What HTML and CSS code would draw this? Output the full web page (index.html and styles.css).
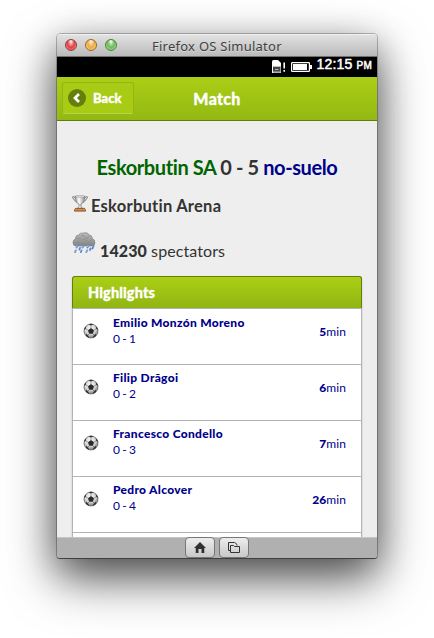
FILE: index.html
```html
<!DOCTYPE html>
<html lang="en">
<head>
<meta charset="utf-8">
<title>Firefox OS Simulator</title>
<link rel="stylesheet" href="styles.css">
</head>
<body>
<svg class="defs" width="0" height="0" aria-hidden="true">
  <defs>
    <radialGradient id="ballShade" cx="45%" cy="35%" r="65%">
      <stop offset="0" stop-color="#fff"/><stop offset=".6" stop-color="#d2d2d2"/><stop offset="1" stop-color="#777"/>
    </radialGradient>
    <linearGradient id="silver" x1="0" x2="1" y1="0" y2="0">
      <stop offset="0" stop-color="#999"/><stop offset=".4" stop-color="#fff"/><stop offset="1" stop-color="#888"/>
    </linearGradient>
    <linearGradient id="cloudShade" x1="0" x2="0" y1="0" y2="1">
      <stop offset="0" stop-color="#bbb"/><stop offset="1" stop-color="#858585"/>
    </linearGradient>
    <symbol id="ball" viewBox="0 0 16 16">
      <circle cx="8" cy="8" r="7" fill="url(#ballShade)" stroke="#555" stroke-width=".7"/>
      <path d="M8 5l3 2.200-1.100 3.500H6.100L5 7.200zM5.500 1.500L8 2.600l2.500-1.100L8 .8zM1 7l1.800-1.300.6-2.400L1.500 5.300zM15 7l-1.800-1.300-.6-2.400 1.900 2zM3 12.800l.4-2.300 2.600 3.400-.4.800zM13 12.800l-.4-2.300-2.600 3.400.4.800z" fill="#292929"/>
      <path d="M8 2.600V5M2.800 5.700L5 7.200M13.200 5.700L11 7.200M6.100 10.700L4.800 12.400M9.900 10.700l1.300 1.700" stroke="#666" stroke-width=".6"/>
    </symbol>
  </defs>
</svg>
<main class="window">
  <div class="titlebar">
    <i class="light red"></i><i class="light amber"></i><i class="light green"></i>
    <span class="title">Firefox OS Simulator</span>
  </div>
  <div class="status">
    <svg class="sim" width="14" height="14" viewBox="0 0 14 14"><path d="M0 1.500Q0 0 1.500 0H6l3 3v9.500q0 .5-.5.500h-8Q0 13 0 12.500z" fill="#fff"/><path d="M1 6.500h7.500v6H1z" fill="#444"/><path d="M1 6.500h7.500M1 12h7.500M3 9.500h3.500" stroke="#bbb" stroke-width="1"/><path d="M12.200 2.500v6" stroke="#fff" stroke-width="1.600"/><path d="M12.200 10v1.800" stroke="#fff" stroke-width="1.600"/></svg>
    <svg class="battery" width="21" height="10" viewBox="0 0 21 10"><rect x=".6" y=".6" width="17.800" height="8.800" rx=".6" fill="none" stroke="#fff" stroke-width="1.200"/><path d="M2 2h14v6H2zM19 3h2v4h-2z" fill="#fff"/></svg>
    <span class="time">12:15 <small>PM</small></span>
  </div>
  <header class="header">
    <a class="back"><svg width="18" height="18" viewBox="0 0 18 18"><circle cx="9" cy="9" r="9" fill="#667e0b"/><path d="M11 5L7 9l4 4" fill="none" stroke="#fff" stroke-width="2.700"/></svg><span>Back</span></a>
    <h1>Match</h1>
  </header>
  <section class="content">
    <h2><span class="home">Eskorbutin SA</span> <span class="score">0 - 5</span> <span class="away">no-suelo</span></h2>
    <div class="arena">
      <svg width="16" height="17" viewBox="0 0 16 17"><path d="M4 3Q0 .5.600 2.500T5 7.500M12 3q4-2.500 3.400-.5T11 7.500" fill="none" stroke="#777" stroke-width="1"/><path d="M3 1.300h10Q12.500 8 9 9v2.500l2 2.500H5l2-2.500V9Q3.500 8 3 1.300z" fill="url(#silver)" stroke="#777" stroke-width=".8"/><ellipse cx="8" cy="1.500" rx="5" ry=".8" fill="#eee" stroke="#888" stroke-width=".5"/><path d="M3.500 13.300h9l1 1.500v1.400H2.500v-1.400z" fill="#b96b2a" stroke="#76431c" stroke-width=".6"/><path d="M3.200 14.800h9.600" stroke="#e9b07a" stroke-width=".7"/></svg>
      <b>Eskorbutin Arena</b>
    </div>
    <div class="crowd">
      <svg width="24" height="22" viewBox="0 0 24 22"><path d="M4 14Q1 14 1 10.500 1 7.500 3.500 7 3 3.500 6.500 3 8 .5 11.500 1 15-.5 17.500 3q3 .5 2.800 3.500 2.700 1 2.700 4.200 0 3.300-3.500 3.300z" fill="url(#cloudShade)" stroke="#7c7c7c" stroke-width=".6"/><path d="M5 7q2-2 4 0M9 4q2-2 4 1t4-1M10 8q3-2 5 1t5-2M4 11q3-2 5 0t6 0" fill="none" stroke="#888" stroke-width=".7"/><path d="M5.500 13.500l-1 2M11.500 13.500l-1 2M16.500 13l-1 2.500M21.500 14l-1 2.500M8 16l-.6 1.500M18.500 16.500l-.6 1.500M3.700 18.500l-.6 1.500M9.500 18.500l-.6 1.500M15 18.500l-.6 1.500" stroke="#5b8bcc" stroke-width="1.900" stroke-linecap="round"/><path d="M5 14l-.4 1M11 14l-.4 1M16 13.500l-.4 1M3.300 19l-.4.600M14.700 19l-.3.600" stroke="#b8d6f8" stroke-width=".8" stroke-linecap="round"/></svg>
      <span><b>14230</b> spectators</span>
    </div>
    <div class="list">
      <h3>Highlights</h3>
      <div class="row first"><svg class="ball"><use href="#ball"/></svg><div class="goal"><b>Emilio Monzón Moreno</b><span>0 - 1</span></div><div class="minute"><b>5</b>min</div></div>
      <div class="row"><svg class="ball"><use href="#ball"/></svg><div class="goal"><b>Filip Drăgoi</b><span>0 - 2</span></div><div class="minute"><b>6</b>min</div></div>
      <div class="row"><svg class="ball"><use href="#ball"/></svg><div class="goal"><b>Francesco Condello</b><span>0 - 3</span></div><div class="minute"><b>7</b>min</div></div>
      <div class="row"><svg class="ball"><use href="#ball"/></svg><div class="goal"><b>Pedro Alcover</b><span>0 - 4</span></div><div class="minute"><b>26</b>min</div></div>
      <div class="row"></div>
    </div>
  </section>
  <footer class="toolbar">
    <div class="button"><svg width="12" height="11" viewBox="0 0 12 11"><path d="M6 0l6 6h-1.700v5H7.500V7h-3v4H1.700V6H0z" fill="#303030"/></svg></div>
    <div class="button"><svg width="12" height="11" viewBox="0 0 12 11"><path d="M2.500 8.500h-2v-8h6.200l2.300 2v1M2.500 10.500v-7h3l1 1h5v6z" fill="none" stroke="#333" stroke-width="1"/></svg></div>
  </footer>
</main>
</body>
</html>
```

FILE: styles.css
```css
* { box-sizing: border-box; }
body { margin: 0; height: 638px; padding: 34px 57px 0; overflow: hidden; background: #fff; font-family: Lato, sans-serif; color: #333; }
.defs { position: absolute; }
.window { width: 320px; height: 524px; display: flex; flex-direction: column; border-radius: 4px 4px 3px 3px; overflow: hidden; box-shadow: 0 0 0 1px rgba(0,0,0,.25), 0 1px 0 #555, 0 20px 50px rgba(0,0,0,.62), 0 10px 34px rgba(0,0,0,.28); }
.titlebar { height: 23px; flex: none; display: flex; align-items: center; padding-left: 8px; gap: 8px; background: linear-gradient(#e3e3e3, #bababa); border-bottom: 1px solid #717171; box-shadow: inset 0 1px #f1f1f1; }
.light { width: 12px; height: 12px; flex: none; border-radius: 50%; border: 1px solid; }
.red { border-color: #8f3d3d; background: radial-gradient(ellipse at 50% 15%, #fff 0, #f6a6a6 20%, #e23f43 50%, #ff9c9c 100%); }
.amber { border-color: #98662f; background: radial-gradient(ellipse at 50% 15%, #fff 0, #f7d195 20%, #efaa45 50%, #ffe492 100%); }
.green { border-color: #4d803e; background: radial-gradient(ellipse at 50% 15%, #fff 0, #b8dfae 20%, #6bb95d 50%, #bff29f 100%); }
.title { margin: 2px 0 0 27px; font: 13px/22px "Noto Sans", sans-serif; letter-spacing: .25px; color: #404040; white-space: nowrap; text-shadow: 0 1px rgba(255,255,255,.4); }
.status { height: 20px; flex: none; background: #000; color: #fff; display: flex; justify-content: flex-end; align-items: flex-start; padding-right: 5px; }
.sim { margin: 3px 5px 0 0; }
.battery { margin: 5px 4px 0 0; }
.time { font: 500 14px/15px "Liberation Sans", sans-serif; -webkit-text-stroke: .5px #fff; letter-spacing: .2px; white-space: nowrap; }
.time small { font-size: 10px; }
.header { height: 44px; flex: none; display: grid; grid-template-columns: 77px 1fr 77px; align-items: center; background: linear-gradient(#abcf15, #93b813); border-bottom: 1px solid #5f7d07; color: #fff; }
.back { height: 32px; width: 72px; margin: 0 0 2px 5px; padding-left: 5px; display: flex; align-items: center; gap: 7px; border: 1px solid #94b512; border-bottom-color: #b7d54a; border-radius: 3px; background: #a8cc16; font-size: 13px; font-weight: 900; -webkit-text-stroke: .3px #fff; }
.header h1 { margin: 0; text-align: center; font-size: 16px; font-weight: 900; line-height: 20px; letter-spacing: .3px; -webkit-text-stroke: .3px #fff; }
.content { flex: 1; min-height: 0; overflow: hidden; background: #eee; padding: 33px 15px 0; }
.content h2 { margin: 0; text-align: center; font-size: 20px; line-height: 26px; font-weight: 700; letter-spacing: -.4px; white-space: nowrap; }
.home { color: #006400; }
.away { color: #00008b; }
.arena { display: flex; align-items: flex-start; gap: 3px; height: 22px; margin-top: 15px; font-size: 16.500px; line-height: 22px; letter-spacing: .25px; }
.crowd { display: flex; align-items: flex-start; gap: 4px; height: 25px; margin-top: 15px; font-size: 16px; letter-spacing: .1px; }
.crowd span { line-height: 31px; white-space: nowrap; margin-top: 3px; }
.crowd b { font-weight: 900; }
.list { margin-top: 19px; width: 290px; border: 1px solid #b3b3b3; border-top: 0; border-radius: 4px 4px 0 0; background: #fff; box-shadow: 0 1px 2px rgba(0,0,0,.2); }
.list h3 { margin: 0 -1px; height: 32px; padding: 1px 15px 0; border: 1px solid #648008; border-bottom: 0; border-radius: 3px 3px 0 0; background: linear-gradient(#abcf15, #91b513); color: #fff; font-size: 14.500px; line-height: 30px; font-weight: 900; letter-spacing: .1px; -webkit-text-stroke: .3px #fff; }
.row { height: 56px; border-top: 1px solid #b3b3b3; padding: 0 15px 0 10px; display: flex; color: #00008b; font-size: 12px; }
.ball { width: 16px; height: 16px; margin: 14px 14px 0 0; }
.goal { flex: 1; display: flex; flex-direction: column; padding-top: 5px; line-height: 16px; }
.first .goal { padding-top: 6px; }
.goal b { font-weight: 900; font-size: 12px; letter-spacing: .3px; }
.goal span { letter-spacing: -.4px; }
.minute { padding-top: 13px; line-height: 20px; font-size: 12px; letter-spacing: .1px; }
.minute b { font-weight: 900; }
.toolbar { height: 21px; flex: none; display: flex; justify-content: center; gap: 4px; background: #b0b0b0; box-shadow: inset 0 1px #c5c5c5; }
.button { width: 30px; height: 21px; border: 1px solid #777; border-radius: 4px; background: linear-gradient(#ededed, #c8c8c8); display: flex; align-items: center; justify-content: center; }
```
